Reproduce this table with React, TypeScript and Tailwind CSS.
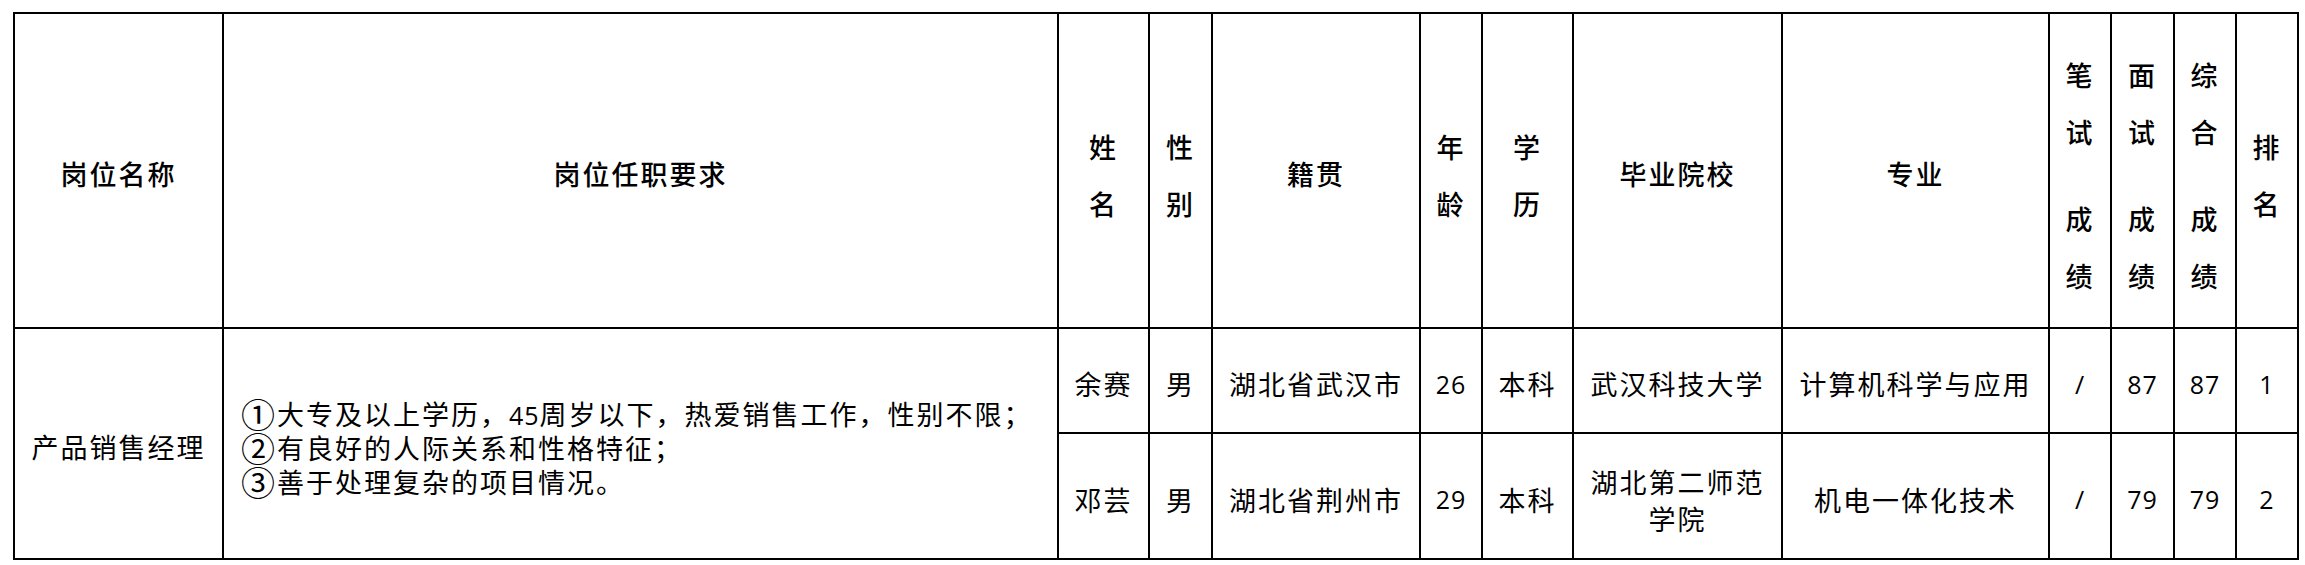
import React from 'react';

type Row = {
    name: string;
    gender: string;
    origin: string;
    age: string;
    degree: string;
    school: React.ReactNode;
    major: string;
    written: string;
    interview: string;
    total: string;
    rank: string;
};

const rows: Row[] = [
    {
        name: '余赛',
        gender: '男',
        origin: '湖北省武汉市',
        age: '26',
        degree: '本科',
        school: '武汉科技大学',
        major: '计算机科学与应用',
        written: '/',
        interview: '87',
        total: '87',
        rank: '1',
    },
    {
        name: '邓芸',
        gender: '男',
        origin: '湖北省荆州市',
        age: '29',
        degree: '本科',
        school: (
            <span className="leading-[37px]">
                湖北第二师范
                <br />
                学院
            </span>
        ),
        major: '机电一体化技术',
        written: '/',
        interview: '79',
        total: '79',
        rank: '2',
    },
];

const cell = 'bg-white flex items-center justify-center text-center pt-[8px]';
const head = `${cell} font-medium`;
const num = "font-['Open_Sans',sans-serif] text-[25px] tracking-[1px]";
const circ = 'inline-block align-top h-[34px] leading-[34px] text-[34px] tracking-[0px] mr-[2px]';

function Stack({ chars }: { chars: string[] }) {
    return (
        <div className="flex flex-col items-center">
            {chars.map((c, i) =>
                c === '' ? (
                    <div key={i} className="h-[30px]" />
                ) : (
                    <div key={i} className="leading-[57px]">
                        {c}
                    </div>
                )
            )}
        </div>
    );
}

export default function App() {
    return (
        <div className="w-[2305px] h-[565px] bg-white pt-[12px] pl-[13px] text-black font-['Noto_Sans_CJK_SC',sans-serif] text-[27px] tracking-[2px]">
            <div className="grid w-fit grid-cols-[207px_833px_89px_61px_206px_60px_89px_207px_265px_60px_61px_60px_60px] grid-rows-[313px_103px_124px] gap-[2px] bg-black p-[2px]">
                {/* header */}
                <div className={head}>岗位名称</div>
                <div className={head}>岗位任职要求</div>
                <div className={head}>
                    <Stack chars={['姓', '名']} />
                </div>
                <div className={head}>
                    <Stack chars={['性', '别']} />
                </div>
                <div className={head}>籍贯</div>
                <div className={head}>
                    <Stack chars={['年', '龄']} />
                </div>
                <div className={head}>
                    <Stack chars={['学', '历']} />
                </div>
                <div className={head}>毕业院校</div>
                <div className={head}>专业</div>
                <div className={head}>
                    <Stack chars={['笔', '试', '', '成', '绩']} />
                </div>
                <div className={head}>
                    <Stack chars={['面', '试', '', '成', '绩']} />
                </div>
                <div className={head}>
                    <Stack chars={['综', '合', '', '成', '绩']} />
                </div>
                <div className={head}>
                    <Stack chars={['排', '名']} />
                </div>

                {/* merged position cells */}
                <div className={`${cell} row-span-2`}>产品销售经理</div>
                <div className="row-span-2 bg-white flex flex-col justify-center pl-[17px] pt-[8px] leading-[34px]">
                    <div className="h-[34px] whitespace-nowrap">
                        <span className={circ}>①</span>大专及以上学历，<span className={num}>45</span>周岁以下，热爱销售工作，性别不限；
                    </div>
                    <div className="h-[34px] whitespace-nowrap">
                        <span className={circ}>②</span>有良好的人际关系和性格特征；
                    </div>
                    <div className="h-[34px] whitespace-nowrap">
                        <span className={circ}>③</span>善于处理复杂的项目情况。
                    </div>
                </div>

                {rows.map((r) => (
                    <React.Fragment key={r.name}>
                        <div className={cell}>{r.name}</div>
                        <div className={cell}>{r.gender}</div>
                        <div className={cell}>{r.origin}</div>
                        <div className={cell}>
                            <span className={num}>{r.age}</span>
                        </div>
                        <div className={cell}>{r.degree}</div>
                        <div className={cell}>{r.school}</div>
                        <div className={cell}>{r.major}</div>
                        <div className={cell}>
                            <span className={num}>{r.written}</span>
                        </div>
                        <div className={cell}>
                            <span className={num}>{r.interview}</span>
                        </div>
                        <div className={cell}>
                            <span className={num}>{r.total}</span>
                        </div>
                        <div className={cell}>
                            <span className={num}>{r.rank}</span>
                        </div>
                    </React.Fragment>
                ))}
            </div>
        </div>
    );
}
